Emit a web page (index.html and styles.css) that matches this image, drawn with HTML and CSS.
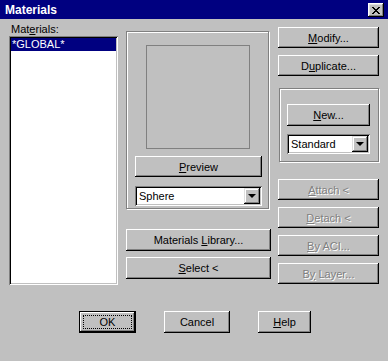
FILE: index.html
```html
<!DOCTYPE html>
<html lang="en">
<head>
    <meta charset="UTF-8">
    <title>Materials</title>
    <link rel="stylesheet" href="styles.css">
</head>
<body>
    <div class="window">
        <div class="titlebar">
            <span class="title">Materials</span>
            <button class="close-btn" aria-label="Close">
                <svg width="8" height="7" viewBox="0 0 8 7">
                    <path d="M0 0h2v1h1v1h2V1h1V0h2v1H7v1H6v1H5v1h1v1h1v1h1v1H6V6H5V5H3v1H2v1H0V6h1V5h1V4h1V3H2V2H1V1H0z" fill="#000"/>
                </svg>
            </button>
        </div>

        <div class="content">
            <div class="col-list">
                <label class="field-label">Mat<u>e</u>rials:</label>
                <div class="listbox">
                    <div class="list-item selected">*GLOBAL*</div>
                </div>
            </div>

            <div class="col-preview">
                <div class="group preview-group">
                    <div class="preview-box"></div>
                    <button class="btn preview-btn"><u>P</u>review</button>
                    <div class="combo preview-combo">
                        <span class="combo-text">Sphere</span>
                        <span class="combo-arrow"></span>
                    </div>
                </div>
                <button class="btn library-btn">Materials <u>L</u>ibrary...</button>
                <button class="btn select-btn"><u>S</u>elect &lt;</button>
            </div>

            <div class="col-actions">
                <button class="btn action-btn first"><u>M</u>odify...</button>
                <button class="btn action-btn">D<u>u</u>plicate...</button>
                <div class="group new-group">
                    <button class="btn new-btn"><u>N</u>ew...</button>
                    <div class="combo new-combo">
                        <span class="combo-text">Standard</span>
                        <span class="combo-arrow"></span>
                    </div>
                </div>
                <button class="btn action-btn disabled spaced"><u>A</u>ttach &lt;</button>
                <button class="btn action-btn disabled"><u>D</u>etach &lt;</button>
                <button class="btn action-btn disabled"><u>B</u>y ACI...</button>
                <button class="btn action-btn disabled">B<u>y</u> Layer...</button>
            </div>
        </div>

        <div class="footer">
            <button class="btn default-btn"><span class="focus-ring">OK</span></button>
            <button class="btn cancel-btn">Cancel</button>
            <button class="btn help-btn"><u>H</u>elp</button>
        </div>
    </div>
</body>
</html>
```

FILE: styles.css
```css
* {
    margin: 0;
    padding: 0;
    box-sizing: border-box;
    font-family: 'Liberation Sans', Arial, sans-serif;
}

body {
    background: #c0c0c0;
    overflow: hidden;
}

.window {
    width: 388px;
    height: 361px;
    background: #c0c0c0;
    color: #000;
    font-size: 11px;
}

u {
    text-decoration: underline;
    text-underline-offset: 1px;
}

/* title bar */
.titlebar {
    height: 19px;
    background: #000080;
    color: #fff;
    display: flex;
    align-items: center;
    justify-content: space-between;
    padding: 0 4px 0 5px;
}

.title {
    font-weight: bold;
    font-size: 12px;
}

.close-btn {
    width: 16px;
    height: 14px;
    margin-top: 1px;
    background: #c0c0c0;
    border: none;
    display: flex;
    align-items: center;
    justify-content: center;
    box-shadow: inset -1px -1px #000, inset 1px 1px #fff, inset -2px -2px #808080, inset 2px 2px #dfdfdf;
}

/* buttons */
.btn {
    display: block;
    background: #c0c0c0;
    border: none;
    color: #000;
    font-size: 11px;
    text-align: center;
    box-shadow: inset -1px -1px #000, inset 1px 1px #fff, inset -2px -2px #808080, inset 2px 2px #c0c0c0;
    cursor: pointer;
}

.btn.disabled {
    color: #808080;
    text-shadow: 1px 1px 0 #fff;
    cursor: default;
}

/* main area */
.content {
    display: flex;
    align-items: flex-start;
    height: 271px;
}

.col-list {
    margin-left: 9px;
    width: 109px;
    padding-top: 4px;
}

.field-label {
    display: block;
    height: 13px;
    line-height: 13px;
    padding-left: 2px;
}

.listbox {
    height: 249px;
    background: #fff;
    padding: 2px;
    box-shadow: inset 1px 1px #808080, inset -1px -1px #fff, inset 2px 2px #000, inset -2px -2px #c0c0c0;
}

.list-item {
    height: 13px;
    line-height: 13px;
    padding-left: 1px;
}

.list-item.selected {
    background: #000080;
    color: #fff;
}

/* etched group frames */
.group {
    border: 1px solid #808080;
    box-shadow: inset 1px 1px #fff, 1px 1px #fff;
}

.col-preview {
    margin-left: 8px;
    width: 145px;
    padding-top: 12px;
}

.preview-group {
    width: 143px;
    height: 178px;
    padding: 13px 0 0 8px;
}

.preview-box {
    width: 104px;
    height: 104px;
    margin-left: 11px;
    border: 1px solid #808080;
}

.preview-btn {
    width: 127px;
    height: 21px;
    margin-top: 7px;
}

.combo {
    display: flex;
    align-items: center;
    height: 20px;
    background: #fff;
    padding: 2px;
    box-shadow: inset 1px 1px #808080, inset -1px -1px #fff, inset 2px 2px #000, inset -2px -2px #c0c0c0;
}

.combo-text {
    flex: 1;
    padding-left: 2px;
    line-height: 16px;
}

.combo-arrow {
    width: 16px;
    height: 16px;
    background: #c0c0c0;
    box-shadow: inset -1px -1px #000, inset 1px 1px #dfdfdf, inset -2px -2px #808080, inset 2px 2px #fff;
    position: relative;
}

.combo-arrow::after {
    content: '';
    position: absolute;
    left: 4px;
    top: 6px;
    border-left: 4px solid transparent;
    border-right: 4px solid transparent;
    border-top: 4px solid #000;
}

.preview-combo {
    width: 127px;
    margin-top: 9px;
}

.library-btn,
.select-btn {
    width: 145px;
    height: 22px;
}

.library-btn {
    margin-top: 20px;
}

.select-btn {
    margin-top: 6px;
}

/* right column */
.col-actions {
    margin-left: 7px;
    width: 102px;
    padding-top: 8px;
}

.action-btn {
    width: 101px;
    height: 21px;
    margin-top: 7px;
}

.action-btn.first {
    margin-top: 0;
}

.action-btn.spaced {
    margin-top: 17px;
}

.new-group {
    width: 100px;
    height: 74px;
    margin: 12px 0 0 1px;
    padding: 15px 0 0 7px;
}

.new-btn {
    width: 83px;
    height: 22px;
}

.new-combo {
    width: 83px;
    margin-top: 8px;
}

/* bottom buttons */
.footer {
    display: flex;
    padding: 21px 0 0 79px;
}

.footer .btn {
    height: 22px;
}

.default-btn {
    width: 57px;
    padding: 4px;
    box-shadow: inset 0 0 0 1px #000, inset -2px -2px #000, inset 2px 2px #fff, inset -3px -3px #808080;
}

.focus-ring {
    display: block;
    height: 14px;
    line-height: 12px;
    border: 1px dotted #000;
}

.cancel-btn {
    width: 66px;
    margin-left: 28px;
}

.help-btn {
    width: 53px;
    margin-left: 28px;
}
```
